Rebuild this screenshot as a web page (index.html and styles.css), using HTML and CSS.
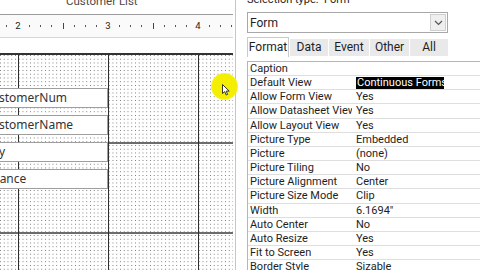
FILE: index.html
```html
<!DOCTYPE html>
<html>
<head>
<meta charset="utf-8">
<link rel="stylesheet" href="styles.css">
</head>
<body>
<div class="app">
  <div class="design">
    <div class="canvas">
      <div class="hdr"><span class="title">Customer List</span></div>
      <div class="ruler">
        <span class="rc"><i class="tk"></i></span>
        <span class="rc num">2</span>
        <span class="rc"><i class="tk"></i></span>
        <span class="rc"><i class="tk"></i></span>
        <span class="rc"><i class="tk"></i></span>
        <span class="rc"><i class="half"></i></span>
        <span class="rc"><i class="tk"></i></span>
        <span class="rc"><i class="tk"></i></span>
        <span class="rc"><i class="tk"></i></span>
        <span class="rc num">3</span>
        <span class="rc"><i class="tk"></i></span>
        <span class="rc"><i class="tk"></i></span>
        <span class="rc"><i class="tk"></i></span>
        <span class="rc"><i class="half"></i></span>
        <span class="rc"><i class="tk"></i></span>
        <span class="rc"><i class="tk"></i></span>
        <span class="rc"><i class="tk"></i></span>
        <span class="rc num">4</span>
        <span class="rc"><i class="tk"></i></span>
        <span class="rc"><i class="tk"></i></span>
        <span class="rc"><i class="tk"></i></span>
      </div>
      <div class="strip"></div>
      <div class="grid">
        <div class="field">CustomerNum</div>
        <div class="field">CustomerName</div>
        <div class="field">City</div>
        <div class="field wide">Balance</div>
      </div>
    </div>
  </div>
  <div class="props">
    <div class="seltype">Selection type:&nbsp; Form</div>
    <div class="combo">
      <span class="ctext">Form</span>
      <span class="btn"><svg width="9" height="6" viewBox="0 0 9 6"><path d="M1 1 L4.5 4.5 L8 1" fill="none" stroke="#555" stroke-width="1.2"/></svg></span>
    </div>
    <div class="tabs">
      <div class="tab on w1">Format</div>
      <div class="tab w2">Data</div>
      <div class="tab w3">Event</div>
      <div class="tab w4">Other</div>
      <div class="tab w5">All</div>
    </div>
    <div class="sheet">
      <div class="row"><div class="name">Caption</div><div class="val"></div></div>
      <div class="row"><div class="name">Default View</div><div class="val"><span class="sel">Continuous Forms</span></div></div>
      <div class="row"><div class="name">Allow Form View</div><div class="val">Yes</div></div>
      <div class="row"><div class="name">Allow Datasheet View</div><div class="val">Yes</div></div>
      <div class="row"><div class="name">Allow Layout View</div><div class="val">Yes</div></div>
      <div class="row"><div class="name">Picture Type</div><div class="val">Embedded</div></div>
      <div class="row"><div class="name">Picture</div><div class="val">(none)</div></div>
      <div class="row"><div class="name">Picture Tiling</div><div class="val">No</div></div>
      <div class="row"><div class="name">Picture Alignment</div><div class="val">Center</div></div>
      <div class="row"><div class="name">Picture Size Mode</div><div class="val">Clip</div></div>
      <div class="row"><div class="name">Width</div><div class="val">6.1694"</div></div>
      <div class="row"><div class="name">Auto Center</div><div class="val">No</div></div>
      <div class="row"><div class="name">Auto Resize</div><div class="val">Yes</div></div>
      <div class="row"><div class="name">Fit to Screen</div><div class="val">Yes</div></div>
      <div class="row"><div class="name">Border Style</div><div class="val">Sizable</div></div>
    </div>
  </div>
  <div class="hilite">
    <svg class="cursor" width="8" height="12" viewBox="0 0 8 12"><path d="M0.5 0.5 L0.5 9.5 L2.7 7.6 L4.2 11 L5.6 10.4 L4.2 7.1 L7.2 7.1 Z" fill="#fff" stroke="#222" stroke-width="0.9" stroke-linejoin="round"/></svg>
  </div>
</div>
</body>
</html>
```
FILE: styles.css
```css
html, body {
  margin: 0;
  padding: 0;
}
body {
  width: 480px;
  height: 270px;
  overflow: hidden;
  background: #fff;
  font-family: Roboto, "Noto Sans", sans-serif;
  color: #1e1e1e;
}
.app {
  position: relative;
  display: flex;
  height: 270px;
}
.design {
  flex: none;
  width: 235px;
  height: 270px;
  border-right: 1px solid #c6c6c6;
  overflow: hidden;
}
.canvas {
  width: 233px;
}
.hdr {
  height: 14px;
  border-bottom: 1px solid #9c9c9c;
  overflow: hidden;
}
.title {
  display: block;
  margin: -7px 0 0 66px;
  font-size: 11.5px;
  line-height: 16px;
  color: #4a4a4a;
}
.ruler {
  display: flex;
  align-items: center;
  height: 22px;
  padding-left: 1.125px;
  border-bottom: 1px solid #d6d6d6;
  background: #fafafa;
  font-size: 9.5px;
  color: #222;
}
.rc {
  flex: none;
  width: 11.25px;
  display: flex;
  justify-content: center;
  align-items: center;
  line-height: 10px;
}
.tk {
  display: block;
  width: 1px;
  height: 2px;
  background: #555;
}
.half {
  display: block;
  width: 1px;
  height: 6px;
  background: #444;
}
.strip {
  height: 15px;
}
.grid {
  height: 182px;
  padding-top: 33px;
  border-top: 2px solid #333;
  display: flex;
  flex-direction: column;
  gap: 7px;
  background:
    linear-gradient(to right, #2e2e2e 0 1px, transparent 1px) 18px 0 / 90px 100% repeat-x,
    linear-gradient(to bottom, #6c6c6c 0 2px, transparent 2px) 0 87px / 100% 90px repeat-y,
    conic-gradient(at 1px 1px, transparent 270deg, #777 270deg) 0 0 / 3.75px 3.75px,
    #fff;
}
.field {
  box-sizing: border-box;
  width: 125px;
  height: 20px;
  margin-left: -17px;
  border: 1px solid #9e9e9e;
  background: #fff;
  font-family: "Noto Sans", sans-serif;
  font-size: 12px;
  line-height: 18px;
  color: #333;
  white-space: nowrap;
  overflow: hidden;
}
.field.wide {
  text-indent: -2px;
}
.props {
  flex: 1;
  padding-left: 11px;
  overflow: hidden;
  font-size: 11px;
}
.seltype {
  height: 12px;
  overflow: hidden;
  white-space: nowrap;
}
.seltype::before {
  content: "";
  display: block;
  margin-top: -7px;
}
.combo {
  box-sizing: border-box;
  width: 201px;
  height: 21px;
  border: 1px solid #a8a8a8;
  display: flex;
  align-items: center;
  font-size: 12px;
}
.ctext {
  padding-left: 2px;
}
.btn {
  box-sizing: border-box;
  margin-left: auto;
  margin-right: 1px;
  width: 16px;
  height: 17px;
  background: #efefef;
  border: 1px solid #cfcfcf;
  display: flex;
  align-items: center;
  justify-content: center;
}
.tabs {
  display: flex;
  gap: 1px;
  height: 20px;
  margin-top: 4px;
}
.tab {
  box-sizing: border-box;
  margin-top: 2px;
  height: 17px;
  background: #e9e9e9;
  font-size: 12px;
  line-height: 16px;
  text-align: center;
}
.tab.on {
  margin-top: 0;
  height: 20px;
  background: #fff;
  border: 1px solid #cacaca;
  border-bottom: none;
  line-height: 18px;
}
.w1 { width: 42px; }
.w2 { width: 38px; }
.w3 { width: 40px; }
.w4 { width: 39px; }
.w5 { width: 38px; }
.sheet {
  margin-top: 4px;
  border-top: 1px solid #b5b5b5;
  border-left: 1px solid #b5b5b5;
}
.row {
  box-sizing: border-box;
  display: flex;
  height: 14.17px;
  border-bottom: 1px solid #dedede;
  line-height: 14px;
  white-space: nowrap;
}
.name {
  box-sizing: border-box;
  flex: none;
  width: 105px;
  padding-left: 2px;
  border-right: 1px solid #c8c8c8;
  clip-path: inset(-3px 1px -3px 0);
}
.val {
  padding-left: 3px;
}
.sel {
  display: inline-block;
  vertical-align: top;
  max-width: 86px;
  height: 12px;
  margin-top: 1px;
  line-height: 12px;
  overflow: hidden;
  background: #000;
  color: #fff;
  padding: 0 1px;
}
.hilite {
  position: absolute;
  left: 211px;
  top: 73px;
  width: 27px;
  height: 27px;
  border-radius: 50%;
  background: radial-gradient(circle, #f4ef00 0 62%, rgba(244, 239, 0, 0.5) 80%, rgba(244, 239, 0, 0) 100%);
}
.cursor {
  position: absolute;
  left: 11px;
  top: 11px;
}
```
